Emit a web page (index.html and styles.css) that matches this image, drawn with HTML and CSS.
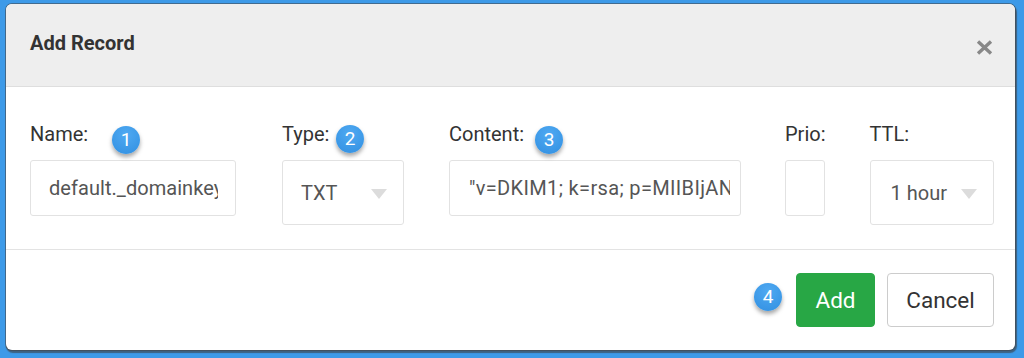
FILE: index.html
```html
<!DOCTYPE html>
<html>
<head>
<meta charset="utf-8">
<link rel="stylesheet" href="styles.css">
</head>
<body>
<div class="dialog">
  <div class="dlg-header">
    <h4 class="dlg-title">Add Record</h4>
    <svg class="close" width="17" height="15" viewBox="0 0 17 15"><path d="M2 1.5 L15 13.5 M15 1.5 L2 13.5" stroke="#888" stroke-width="3.4" stroke-linecap="butt"/></svg>
  </div>
  <div class="dlg-body">
    <div class="field f-name">
      <label class="lbl">Name:</label>
      <div class="ctl input"><span class="val">default._domainkey</span></div>
      <span class="badge b1">1</span>
    </div>
    <div class="field f-type">
      <label class="lbl">Type:</label>
      <div class="ctl select"><span class="val">TXT</span></div>
      <span class="badge b2">2</span>
    </div>
    <div class="field f-content">
      <label class="lbl">Content:</label>
      <div class="ctl input"><span class="val">"v=DKIM1; k=rsa; p=MIIBIjANBgkqhkiG9w0BAQEFAAOCAQ8AMIIBCgKCAQEA</span></div>
      <span class="badge b3">3</span>
    </div>
    <div class="field f-prio">
      <label class="lbl">Prio:</label>
      <div class="ctl input"></div>
    </div>
    <div class="field f-ttl">
      <label class="lbl">TTL:</label>
      <div class="ctl select"><span class="val">1 hour</span></div>
    </div>
  </div>
  <div class="dlg-footer">
    <span class="badge b4">4</span>
    <button class="btn btn-add">Add</button>
    <button class="btn btn-cancel">Cancel</button>
  </div>
</div>
</body>
</html>
```
FILE: styles.css
```css
html, body {
  margin: 0;
  padding: 0;
  background: #3d9ae8;
  font-family: Roboto, "Liberation Sans", sans-serif;
}
body {
  padding: 4px 0 0 6px;
  height: 358px;
  box-sizing: border-box;
  overflow: hidden;
}
.dialog {
  width: 1009px;
  height: 346px;
  background: #fff;
  border-radius: 6px;
  overflow: hidden;
  box-shadow: 0 0 0 1px rgba(70,70,70,0.55), 1px 2px 1px 1px rgba(60,60,60,0.6);
  display: flex;
  flex-direction: column;
}
.dlg-header {
  height: 82px;
  background: #eeeeee;
  border-bottom: 1px solid #dedede;
  display: flex;
  align-items: center;
  justify-content: space-between;
  padding: 0 22px 0 24px;
  flex: none;
}
.dlg-title {
  margin: 0;
  font-size: 20px;
  font-weight: 700;
  color: #333;
  position: relative;
  top: -2px;
}
.close {
  position: relative;
  top: 2px;
}
.dlg-body {
  height: 163px;
  box-sizing: border-box;
  border-bottom: 1px solid #e3e3e3;
  padding: 35px 22px 0 24px;
  display: flex;
  gap: 45px;
  flex: none;
}
.field {
  position: relative;
  display: flex;
  flex-direction: column;
  align-items: flex-start;
}
.lbl {
  font-size: 20px;
  line-height: 24px;
  color: #333;
  margin-bottom: 14px;
}
.ctl {
  box-sizing: border-box;
  border: 1px solid #e2e2e2;
  border-radius: 3px;
  font-size: 20px;
  color: #555;
  white-space: nowrap;
  display: flex;
  align-items: center;
  padding-left: 18px;
}
.val {
  flex: 1;
  min-width: 0;
  overflow: hidden;
}
.input {
  height: 56px;
  padding-right: 17px;
}
.input .val {
  letter-spacing: 0.35px;
}
.f-name .input .val {
  letter-spacing: 0.05px;
}
.select {
  height: 65px;
  position: relative;
}
.select::after {
  content: "";
  position: absolute;
  right: 16px;
  top: 28px;
  border-left: 8px solid transparent;
  border-right: 8px solid transparent;
  border-top: 10px solid #dcdcdc;
}
.f-name .ctl { width: 206px; }
.f-type .ctl { width: 122px; }
.f-content .ctl { width: 292px; padding-left: 19px; padding-right: 10px; }
.f-prio .ctl { width: 40px; padding: 0; }
.f-ttl .ctl { width: 124px; padding-left: 20px; }
.f-type { margin-left: 1px; }
.f-prio { margin-left: -1px; }
.f-ttl { margin-left: -1px; }
.badge {
  position: absolute;
  width: 28px;
  height: 28px;
  border-radius: 50%;
  background: radial-gradient(circle at 50% 30%, #4fa9f2 0%, #3a97e6 70%, #3590df 100%);
  color: #fff;
  font-size: 19px;
  line-height: 28px;
  text-align: center;
  box-shadow: 0 3px 4px rgba(0,0,0,0.35);
}
.b1 { left: 82px; top: 4px; }
.b2 { left: 54px; top: 3px; }
.b3 { left: 86px; top: 4px; }
.dlg-footer {
  flex: 1;
  display: flex;
  align-items: center;
  justify-content: flex-end;
  padding: 0 21px 0 0;
  gap: 12px;
  position: relative;
}
.b4 { left: 748px; top: 33px; }
.btn {
  height: 54px;
  border-radius: 4px;
  font-family: Roboto, "Liberation Sans", sans-serif;
  font-size: 22.5px;
  padding: 0;
  cursor: pointer;
}
.btn-add {
  width: 79px;
  background: #28a745;
  border: 1px solid #28a745;
  color: #fff;
}
.btn-cancel {
  width: 107px;
  background: #fff;
  border: 1px solid #cccccc;
  color: #333;
}
```
